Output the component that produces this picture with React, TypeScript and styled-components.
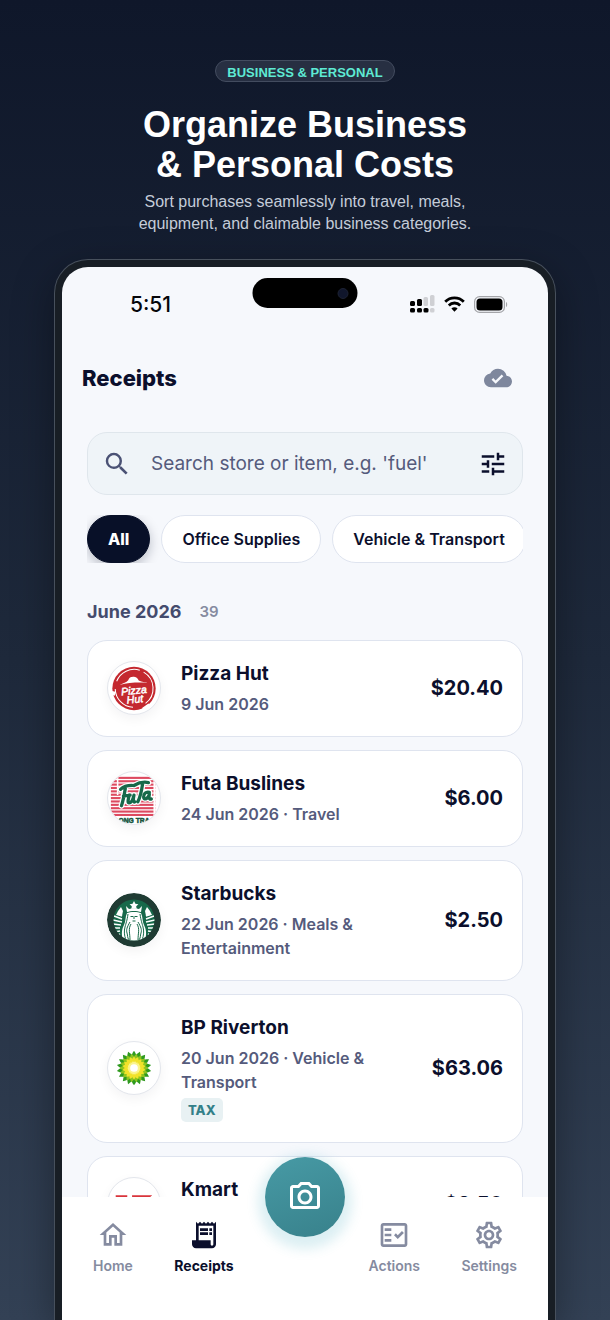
import React from "react";
import styled, { createGlobalStyle, css } from "styled-components";
import {
  MdCloudDone,
  MdOutlineCameraAlt,
  MdOutlineFactCheck,
  MdOutlineHome,
  MdOutlineSettings,
  MdReceiptLong,
  MdSearch,
  MdTune,
} from "react-icons/md";

const ink = "#0b0f2c";
const slate = "#555b7c";
const muted = "#858ba0";
const line = "#dfe4ef";
const paper = "#f6f8fc";

const GlobalStyle = createGlobalStyle`
  *, *::before, *::after { box-sizing: border-box; }
  body { margin: 0; background: #0f172a; }
  button, input { font: inherit; color: inherit; }
  h1, h2, h3, p, ul { margin: 0; padding: 0; }
`;

const Page = styled.main`
  display: flex;
  flex-direction: column;
  height: 100vh;
  min-height: 900px;
  overflow: hidden;
  padding: 60px 54px 0;
  background: linear-gradient(180deg, #0f172a 0%, #1e293b 50%, #334155 100%);
  font-family: Inter, "Liberation Sans", sans-serif;
  color: ${ink};
`;

const Hero = styled.header`
  display: flex;
  flex-direction: column;
  align-items: center;
  text-align: center;
  font-family: "Liberation Sans", Arial, sans-serif;
`;

const Eyebrow = styled.p`
  height: 22px;
  padding: 1px 11px 0;
  border: 1px solid #434c5f;
  border-radius: 12px;
  background: #272f42;
  color: #5eead4;
  font-size: 13px;
  font-weight: 700;
  line-height: 21px;
`;

const Headline = styled.h1`
  margin-top: 23px;
  color: #fff;
  font-size: 36px;
  font-weight: 700;
  line-height: 40px;
`;

const Lede = styled.p`
  margin-top: 6px;
  color: #c4ccd9;
  font-size: 16px;
  line-height: 22px;
`;

const Phone = styled.section`
  display: flex;
  flex: 1;
  min-height: 0;
  margin-top: 24px;
  padding: 7px 7px 0;
  border: 1px solid #47505c;
  border-bottom: 0;
  border-radius: 34px 34px 0 0;
  background: #181e25;
  box-shadow: 0 12px 40px rgba(0, 0, 0, 0.35);
`;

const Screen = styled.div`
  position: relative;
  display: flex;
  flex: 1;
  flex-direction: column;
  min-width: 0;
  overflow: hidden;
  border-radius: 26px 26px 0 0;
  background: ${paper};
`;

const StatusBar = styled.div`
  display: flex;
  flex-shrink: 0;
  align-items: center;
  justify-content: space-between;
  height: 74px;
  padding: 0 40px 0 68px;
`;

const Clock = styled.time`
  color: #05060a;
  font-size: 21px;
  font-weight: 500;
`;

const Island = styled.div`
  position: absolute;
  top: 11px;
  left: 50%;
  display: flex;
  align-items: center;
  justify-content: flex-end;
  width: 105px;
  height: 30px;
  padding-right: 9px;
  border-radius: 15px;
  background: #000;
  transform: translateX(-50%);
`;

const Lens = styled.span`
  width: 11px;
  height: 11px;
  border: 1px solid #1d2233;
  border-radius: 50%;
  background: #10162c;
`;

const Indicators = styled.div`
  display: flex;
  align-items: center;
  gap: 9px;
`;

const TitleBar = styled.div`
  display: flex;
  flex-shrink: 0;
  align-items: center;
  justify-content: space-between;
  height: 74px;
  padding: 0 36px 0 20px;
`;

const Title = styled.h2`
  font-size: 22px;
  font-weight: 800;
  line-height: 28px;
`;

const Content = styled.div`
  flex: 1;
  min-height: 0;
  overflow: hidden;
  padding: 17px 25px 0;
`;

const SearchBox = styled.div`
  display: flex;
  align-items: center;
  height: 63px;
  padding: 0 14px;
  border: 1px solid #dfe6ec;
  border-radius: 20px;
  background: #eff4f8;
`;

const SearchLabel = styled.label`
  display: flex;
  flex: 1;
  align-items: center;
  gap: 19px;
  min-width: 0;
  color: #4b5275;
`;

const SearchInput = styled.input`
  flex: 1;
  min-width: 0;
  padding: 0;
  border: 0;
  outline: 0;
  background: none;
  font-size: 19px;
  &::placeholder {
    color: ${slate};
    opacity: 1;
  }
`;

const IconButton = styled.button`
  display: flex;
  padding: 0;
  border: 0;
  background: none;
  color: ${ink};
  cursor: pointer;
`;

const Chips = styled.div`
  display: flex;
  gap: 11px;
  margin-top: 20px;
  overflow: hidden;
`;

const Chip = styled.button<{ $active?: boolean }>`
  flex-shrink: 0;
  height: 48px;
  padding: 0 20px;
  border: 1px solid ${line};
  border-radius: 24px;
  background: #fff;
  font-size: 16px;
  font-weight: 600;
  cursor: pointer;
  ${(p) =>
    p.$active &&
    css`
      border-color: #081028;
      background: #081028;
      box-shadow: 0 4px 12px rgba(8, 16, 40, 0.25);
      color: #fff;
      font-weight: 800;
    `}
`;

const MonthRow = styled.div`
  display: flex;
  align-items: center;
  gap: 18px;
  margin-top: 37px;
  line-height: 24px;
`;

const Month = styled.h3`
  color: #444b6d;
  font-size: 18px;
  font-weight: 700;
`;

const Count = styled.span`
  color: ${muted};
  font-size: 15px;
  font-weight: 600;
`;

const List = styled.ul`
  display: flex;
  flex-direction: column;
  gap: 13px;
  margin-top: 16px;
  list-style: none;
`;

const Card = styled.li`
  display: flex;
  align-items: center;
  gap: 20px;
  padding: 20px 19px;
  border: 1px solid ${line};
  border-radius: 20px;
  background: #fff;
`;

const Logo = styled.span<{ $filled?: boolean }>`
  display: flex;
  flex-shrink: 0;
  width: 54px;
  height: 54px;
  margin-bottom: 1px;
  overflow: hidden;
  border: ${(p) => (p.$filled ? "0" : "1px solid #e3e6ec")};
  border-radius: 50%;
  background: #fff;
  box-shadow: 0 4px 12px rgba(11, 15, 44, 0.05);
  svg {
    width: 100%;
    height: 100%;
  }
`;

const Details = styled.div`
  display: flex;
  flex: 1;
  flex-direction: column;
  align-items: flex-start;
  min-width: 0;
`;

const Store = styled.h3`
  font-size: 19px;
  font-weight: 700;
  line-height: 26px;
`;

const Meta = styled.p`
  max-width: 200px;
  margin-top: 5px;
  color: ${slate};
  font-size: 16px;
  font-weight: 600;
  line-height: 24px;
`;

const Tag = styled.span`
  margin-top: 4px;
  padding: 0 7px;
  border-radius: 5px;
  background: #e8f1f3;
  color: #338089;
  font-size: 13px;
  font-weight: 800;
  line-height: 24px;
`;

const Amount = styled.span`
  margin-bottom: 2px;
  font-size: 20px;
  font-weight: 700;
  line-height: 26px;
`;

const TabBar = styled.nav`
  position: relative;
  display: flex;
  flex-shrink: 0;
  align-items: flex-start;
  justify-content: space-between;
  height: 123px;
  padding: 22px 31px 0;
  background: #fff;
`;

const Tab = styled.a<{ $active?: boolean }>`
  display: flex;
  flex-direction: column;
  align-items: center;
  gap: 5px;
  color: ${(p) => (p.$active ? ink : muted)};
  font-size: 14px;
  font-weight: ${(p) => (p.$active ? 700 : 600)};
  line-height: 20px;
  text-decoration: none;
`;

const TabGap = styled.span`
  width: 52px;
`;

const ScanButton = styled.button`
  position: absolute;
  top: -40px;
  left: 50%;
  display: flex;
  align-items: center;
  justify-content: center;
  width: 80px;
  height: 80px;
  padding: 0;
  border: 0;
  border-radius: 50%;
  background: linear-gradient(160deg, #479aa5, #38818b);
  box-shadow: 0 5px 12px 7px rgba(70, 170, 190, 0.19);
  color: #fff;
  transform: translateX(-50%);
  cursor: pointer;
`;

const PizzaHutLogo = () => (
  <svg viewBox="0 0 54 54" aria-hidden="true">
    <circle cx="27" cy="27.5" r="22.5" fill="#c4282f" />
    <g fill="none" stroke="#fff" strokeWidth="1.1">
      <path d="M9 20a19.500 19.500 0 0 1 24-11.500" />
      <path d="M37 10.500a19.500 19.500 0 0 1 2 32.500" />
      <path d="M26 47a19.500 19.500 0 0 1-18.500-19" />
    </g>
    <path d="M4 30l4 1-1 4-3-1zM35 48l7-5 2 2-5 5z" fill="#fff" />
    <path d="M12 24c4-2 7-2.500 9-5 1-3 3-4 7-3.500 3 .5 3 3 4.500 4 2.500 1.500 6 1.500 9 2-9-.5-20-.5-29.500 2.500z" fill="#fff" />
    <g fill="#fff" stroke="#fff" strokeWidth=".5" fontFamily="Liberation Sans, sans-serif" fontStyle="italic" textAnchor="middle">
      <text x="27" y="33.5" fontSize="11" transform="rotate(-6 27 31)">Pizza</text>
      <text x="28" y="42.5" fontSize="11" transform="rotate(-6 28 39)">Hut</text>
    </g>
  </svg>
);

const FutaLogo = () => (
  <svg viewBox="0 0 54 54" aria-hidden="true">
    {Array.from({ length: 12 }, (_, i) => (
      <rect key={i} x="3" y={5 + i * 3.5} width="46" height="2.200" fill="#dd4a60" />
    ))}
    <path d="M10 4v20M48 6v40" stroke="#fff" strokeWidth="1.600" />
    <g fill="none" strokeLinecap="round" strokeLinejoin="round">
      {[
        { stroke: "#fff", width: 6 },
        { stroke: "#17694a", width: 3.4 },
      ].map((pen) => (
        <path
          key={pen.stroke}
          stroke={pen.stroke}
          strokeWidth={pen.width}
          d="M13 18c3-3 7-4 12-4M18 17c-1 6-2 12-4 18M16 25l7-1M22 24c-1 5-2 8 0 8s4-4 5-8c-1 4-1 8 1 7M27 14c5-3 10-4 15-3M36 12c-1 7-2 13-5 19M43 21c-4-1-6 2-6 5s4 3 6-3c-1 4 0 6 2 5"
        />
      ))}
    </g>
    <rect y="47" width="54" height="8" fill="#fff" />
    <text x="27" y="53" textAnchor="middle" fontSize="7" fontWeight="800" fontFamily="Liberation Sans, sans-serif" fill="#175540" stroke="#175540" strokeWidth=".5">
      ONG TRA
    </text>
  </svg>
);

const StarbucksLogo = () => (
  <svg viewBox="0 0 54 54" aria-hidden="true">
    <defs>
      <clipPath id="siren-disc">
        <circle cx="27" cy="27" r="20.5" />
      </clipPath>
    </defs>
    <circle cx="27" cy="27" r="27" fill="#1f3b33" />
    <circle cx="27" cy="27" r="20.5" fill="#17694a" />
    <g clipPath="url(#siren-disc)">
      <path d="M27 8l1.400 2.800 3 .4-2.200 2.100.5 3-2.700-1.400-2.700 1.400.5-3-2.200-2.100 3-.4z" fill="#fff" />
      <path d="M19 13l3 3 5-1 5 1 3-3-1 6c-4-1.500-10-1.500-14 0z" fill="#fff" />
      <path d="M20 20c3-1.500 11-1.500 14 0 2 4 1 8 3 12s3 8 1 16H16c-2-8-1-12 1-16s1-8 3-12z" fill="#fff" />
      <g fill="none" stroke="#17694a" strokeWidth="1">
        <path d="M21 21c-1 7-2 9-3 13s-1 8 1 13M23 29c-3 5-4 8-3 11s0 4 2 7M33 21c1 7 2 9 3 13s1 8-1 13M31 29c3 5 4 8 3 11s0 4-2 7" />
        <path d="M24 31c-3 5-1 9-1 16M30 31c3 5 1 9 1 16" />
        <path d="M23.500 23.500h2.500M28 23.500h2.500M25.500 28h3M27 23v3" />
      </g>
      <g fill="none" stroke="#fff" strokeWidth="1.500">
        <path d="M15 23l-5-2M15 26l-8-3M15 29l-9-2M14 32l-9-1M13 35H5M13 38l-6 1M13 41l-5 2M14 44l-4 3" />
        <path d="M39 23l5-2M39 26l8-3M39 29l9-2M40 32l9-1M41 35h8M41 38l6 1M41 41l5 2M40 44l4 3" />
      </g>
      <path d="M11 18l3-4 2 4-1 5-6-1zM43 18l-3-4-2 4 1 5 6-1z" fill="#fff" />
    </g>
  </svg>
);

const sunRings = [
  { radius: 18, half: 2.6, color: "#2f9a1f", turn: 0 },
  { radius: 15, half: 2.4, color: "#8cc41f", turn: 10 },
  { radius: 12, half: 2.1, color: "#f1e22a", turn: 0 },
  { radius: 7, half: 1.4, color: "#fbf48c", turn: 10 },
];

const BpLogo = () => (
  <svg viewBox="0 0 54 54" aria-hidden="true">
    {sunRings.map((ring) => (
      <g key={ring.radius} fill={ring.color}>
        {Array.from({ length: 18 }, (_, i) => (
          <path
            key={i}
            transform={`translate(27 27) rotate(${i * 20 + ring.turn})`}
            d={`M0 0L${-ring.half} ${-ring.radius * 0.7}Q${-ring.half * 0.8} ${-ring.radius * 0.86} 0 ${-ring.radius}Q${ring.half * 0.8} ${-ring.radius * 0.86} ${ring.half} ${-ring.radius * 0.7}Z`}
          />
        ))}
      </g>
    ))}
    <circle cx="27" cy="27" r="4" fill="#fff" />
  </svg>
);

const KmartLogo = () => (
  <svg viewBox="0 0 54 54" aria-hidden="true">
    <path d="M8 18h12v17H8zM25 18h21L35 26.500l11 8.500H25z" fill="#d9343b" />
  </svg>
);

const SignalIcon = () => (
  <svg width="25" height="18" viewBox="0 0 25 18" aria-label="Signal">
    <g fill="#000">
      <rect x="0" y="6" width="5" height="5" rx="1.500" />
      <rect x="7" y="4" width="5" height="7" rx="1.500" />
      <rect x="0" y="13" width="5" height="4.500" rx="1.500" />
      <rect x="7" y="13" width="5" height="4.500" rx="1.500" />
      <rect x="13.500" y="13" width="5" height="4.500" rx="1.500" />
    </g>
    <g fill="#cfd0d4">
      <rect x="13.500" y="2" width="4.500" height="9" rx="1.500" />
      <rect x="20" y="0" width="4.500" height="11" rx="1.500" />
      <rect x="20" y="13" width="4.500" height="4.500" rx="1.500" />
    </g>
  </svg>
);

const WifiIcon = () => (
  <svg width="21" height="16" viewBox="0 0 21 16" aria-label="Wi-Fi">
    <g fill="none" stroke="#000" strokeWidth="2.800">
      <path d="M1.200 5.700a13.200 13.200 0 0 1 18.600 0" />
      <path d="M4.800 9.400a8 8 0 0 1 11.400 0" />
    </g>
    <path d="M10.500 15.800l-3.100-3.200a4.400 4.400 0 0 1 6.200 0z" fill="#000" />
  </svg>
);

const BatteryIcon = () => (
  <svg width="34" height="17" viewBox="0 0 34 17" aria-label="Battery">
    <rect x=".6" y=".6" width="29.800" height="15.800" rx="5" fill="none" stroke="#a4a5a9" strokeWidth="1.200" />
    <rect x="2.500" y="2.500" width="26" height="12" rx="3.500" fill="#000" />
    <path d="M32 6v5c1.600-.6 1.600-4.400 0-5z" fill="#a4a5a9" />
  </svg>
);

const receipts = [
  { store: "Pizza Hut", meta: "9 Jun 2026", amount: "$20.40", logo: <PizzaHutLogo /> },
  { store: "Futa Buslines", meta: "24 Jun 2026 · Travel", amount: "$6.00", logo: <FutaLogo /> },
  { store: "Starbucks", meta: "22 Jun 2026 · Meals & Entertainment", amount: "$2.50", logo: <StarbucksLogo />, filled: true },
  { store: "BP Riverton", meta: "20 Jun 2026 · Vehicle & Transport", amount: "$63.06", logo: <BpLogo />, tag: "TAX" },
  { store: "Kmart", meta: "18 Jun 2026", amount: "$8.50", logo: <KmartLogo /> },
];

export default function App() {
  return (
    <>
      <GlobalStyle />
      <Page>
        <Hero>
          <Eyebrow>BUSINESS &amp; PERSONAL</Eyebrow>
          <Headline>
            Organize Business
            <br />
            &amp; Personal Costs
          </Headline>
          <Lede>
            Sort purchases seamlessly into travel, meals,
            <br />
            equipment, and claimable business categories.
          </Lede>
        </Hero>
        <Phone>
          <Screen>
            <Island>
              <Lens />
            </Island>
            <StatusBar>
              <Clock>5:51</Clock>
              <Indicators>
                <SignalIcon />
                <WifiIcon />
                <BatteryIcon />
              </Indicators>
            </StatusBar>
            <TitleBar>
              <Title>Receipts</Title>
              <MdCloudDone size={28} color="#7e879d" aria-label="Synced" />
            </TitleBar>
            <Content>
              <SearchBox>
                <SearchLabel>
                  <MdSearch size={30} aria-hidden="true" />
                  <SearchInput type="text" aria-label="Search receipts" placeholder="Search store or item, e.g. 'fuel'" />
                </SearchLabel>
                <IconButton aria-label="Filters">
                  <MdTune size={30} />
                </IconButton>
              </SearchBox>
              <Chips>
                <Chip $active>All</Chip>
                <Chip>Office Supplies</Chip>
                <Chip>Vehicle &amp; Transport</Chip>
              </Chips>
              <MonthRow>
                <Month>June 2026</Month>
                <Count>39</Count>
              </MonthRow>
              <List>
                {receipts.map((r) => (
                  <Card key={r.store}>
                    <Logo $filled={r.filled}>{r.logo}</Logo>
                    <Details>
                      <Store>{r.store}</Store>
                      <Meta>{r.meta}</Meta>
                      {r.tag && <Tag>{r.tag}</Tag>}
                    </Details>
                    <Amount>{r.amount}</Amount>
                  </Card>
                ))}
              </List>
            </Content>
            <TabBar>
              <Tab href="#home">
                <MdOutlineHome size={32} aria-hidden="true" />
                Home
              </Tab>
              <Tab href="#receipts" $active>
                <MdReceiptLong size={32} aria-hidden="true" />
                Receipts
              </Tab>
              <TabGap />
              <Tab href="#actions">
                <MdOutlineFactCheck size={32} aria-hidden="true" />
                Actions
              </Tab>
              <Tab href="#settings">
                <MdOutlineSettings size={32} aria-hidden="true" />
                Settings
              </Tab>
              <ScanButton aria-label="Scan receipt">
                <MdOutlineCameraAlt size={36} />
              </ScanButton>
            </TabBar>
          </Screen>
        </Phone>
      </Page>
    </>
  );
}
